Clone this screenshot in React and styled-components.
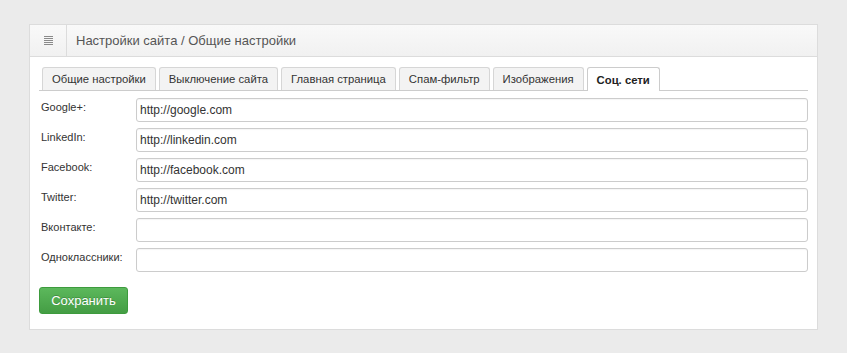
import React from "react";
import styled, { createGlobalStyle } from "styled-components";

const Global = createGlobalStyle`
  html, body { margin: 0; padding: 0; }
  body {
    background: #ebebeb;
    font-family: "Liberation Sans", Arial, sans-serif;
    color: #333;
  }
`;

const Page = styled.div`
  padding: 24px 29px 23px 29px;
`;

const Panel = styled.div`
  background: #fff;
  border: 1px solid #dcdcdc;
  box-sizing: border-box;
`;

const Header = styled.div`
  display: flex;
  align-items: stretch;
  height: 31px;
  background: linear-gradient(#f9f9f9, #f1f1f1);
  border-bottom: 1px solid #dcdcdc;
`;

const IconCell = styled.div`
  width: 36px;
  border-right: 1px solid #dcdcdc;
  display: flex;
  align-items: center;
  justify-content: center;
`;

const Title = styled.div`
  display: flex;
  align-items: center;
  padding-left: 9px;
  font-size: 13px;
  color: #555;
`;

const Body = styled.div`
  padding: 10px 9px 15px 9px;
`;

const Tabs = styled.div`
  display: flex;
  gap: 3px;
  padding-left: 3px;
  border-bottom: 1px solid #ccc;
  height: 23px;
  align-items: flex-end;
`;

const Tab = styled.div`
  box-sizing: border-box;
  padding: 0 9px;
  display: flex;
  align-items: center;
  font-size: 11.3px;
  border: 1px solid ${(p) => (p.$active ? "#ccc" : "#d6d6d6")};
  border-bottom: none;
  border-radius: 3px 3px 0 0;
  background: ${(p) => (p.$active ? "#fff" : "#f3f3f3")};
  color: ${(p) => (p.$active ? "#222" : "#333")};
  font-weight: ${(p) => (p.$active ? "bold" : "normal")};
  margin-bottom: ${(p) => (p.$active ? "-1px" : "0")};
  height: ${(p) => (p.$active ? "24px" : "23px")};
`;

const Form = styled.div`
  display: flex;
  flex-direction: column;
  gap: 6px;
  padding-top: 7px;
  padding-left: 2px;
`;

const Row = styled.div`
  display: flex;
  align-items: flex-start;
`;

const Label = styled.div`
  width: 95px;
  font-size: 11px;
  color: #333;
  padding-top: 3px;
`;

const Input = styled.input`
  flex: 1;
  height: 24px;
  box-sizing: border-box;
  border: 1px solid #ccc;
  border-radius: 3px;
  padding: 0 3px;
  font-family: "Liberation Sans", Arial, sans-serif;
  font-size: 12px;
  color: #333;
  outline: none;
  box-shadow: inset 0 1px 1px rgba(0, 0, 0, 0.04);
`;

const Button = styled.button`
  display: block;
  margin-top: 15px;
  margin-left: 0;
  width: 89px;
  height: 27px;
  border: 1px solid #3d9b3d;
  border-radius: 3px;
  background: linear-gradient(#5cb85c, #449d44);
  color: #fff;
  font-family: "Liberation Sans", Arial, sans-serif;
  font-size: 13px;
  text-shadow: 0 -1px 0 rgba(0, 0, 0, 0.2);
  cursor: pointer;
`;

const MenuIcon = () => (
  <svg width="9" height="9" viewBox="0 0 9 9">
    {[0, 2, 4, 6, 8].map((y) => (
      <rect key={y} x="0" y={y} width="9" height="1" fill="#8a8a8a" />
    ))}
  </svg>
);

const tabs = [
  "Общие настройки",
  "Выключение сайта",
  "Главная страница",
  "Спам-фильтр",
  "Изображения",
  "Соц. сети",
];

const fields = [
  ["Google+:", "http://google.com"],
  ["LinkedIn:", "http://linkedin.com"],
  ["Facebook:", "http://facebook.com"],
  ["Twitter:", "http://twitter.com"],
  ["Вконтакте:", ""],
  ["Одноклассники:", ""],
];

export default function App() {
  return (
    <>
      <Global />
      <Page>
        <Panel>
          <Header>
            <IconCell>
              <MenuIcon />
            </IconCell>
            <Title>Настройки сайта / Общие настройки</Title>
          </Header>
          <Body>
            <Tabs>
              {tabs.map((t, i) => (
                <Tab key={t} $active={i === tabs.length - 1}>
                  {t}
                </Tab>
              ))}
            </Tabs>
            <Form>
              {fields.map(([l, v]) => (
                <Row key={l}>
                  <Label>{l}</Label>
                  <Input defaultValue={v} />
                </Row>
              ))}
            </Form>
            <Button>Сохранить</Button>
          </Body>
        </Panel>
      </Page>
    </>
  );
}
